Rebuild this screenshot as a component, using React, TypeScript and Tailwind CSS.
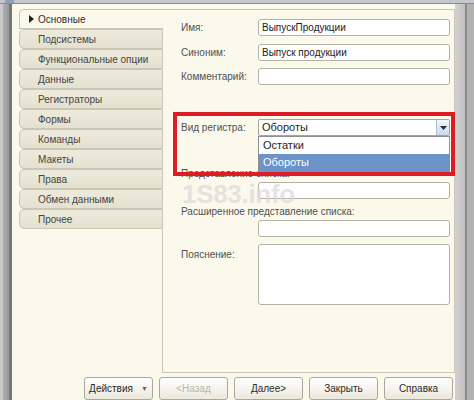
const tabs = [
  'Основные',
  'Подсистемы',
  'Функциональные опции',
  'Данные',
  'Регистраторы',
  'Формы',
  'Команды',
  'Макеты',
  'Права',
  'Обмен данными',
  'Прочее',
];

function Field({ value = '' }: { value?: string }) {
  return (
    <div className="flex-1 h-[17px] rounded-[3px] border border-[#b4b2a4] bg-white pl-[3px] leading-[15px] text-[#222]">
      {value}
    </div>
  );
}

function Row({ label, value, className = '' }: { label: string; value?: string; className?: string }) {
  return (
    <div className={`flex items-center ${className}`}>
      <div className="w-[77px] text-[#505050]">{label}</div>
      <Field value={value} />
    </div>
  );
}

function Button({ label, disabled, menu }: { label: string; disabled?: boolean; menu?: boolean }) {
  return (
    <div
      className={`w-[69px] h-[23px] shrink-0 flex items-center justify-center gap-[8px] rounded-[3px] border border-[#aaa89c] bg-gradient-to-b from-white to-[#ebe8dc] ${
        disabled ? 'text-[#b8b6a8]' : 'text-[#2a2a2a]'
      }`}
    >
      <span>{label}</span>
      {menu && <span className="text-[7px] text-[#666]">▼</span>}
    </div>
  );
}

export default function App() {
  return (
    <div className="w-[474px] h-[400px] overflow-hidden bg-[#b4b4b4] flex flex-col font-['Liberation_Sans',Arial,sans-serif] text-[10px] leading-[13px]">
      <div className="h-[4px] shrink-0 bg-[#c4c7cb] border-b border-[#8a8a8a] pl-[5px]">
        <div className="w-[9px] h-[3px] bg-[#8da2bb]" />
      </div>
      <div className="flex flex-1 min-h-0">
        <div className="w-[12px] flex shrink-0">
          <div className="w-[3px] bg-[#cacaca]" />
          <div className="w-[6px] bg-gradient-to-r from-[#b0b0b0] to-[#989898]" />
          <div className="w-[3px] bg-[#787878]" />
        </div>

        <div className="w-[443px] shrink-0 bg-[#fbf9ec] pl-[7px] pt-[5px] flex flex-col">
          <div className="flex h-[374px]">
            <div className="w-[144px] flex flex-col">
              {tabs.map((t, i) =>
                i === 0 ? (
                  <div
                    key={t}
                    className="h-[20px] flex items-center rounded-tl-[5px] border-l border-t border-b border-[#c9c6b3] bg-[#fbf9ec] pl-[9px] text-[#2e2e2e]"
                  >
                    <svg width="5" height="8" viewBox="0 0 5 8" className="mr-[4px]">
                      <path d="M0 0 L5 4 L0 8 Z" fill="#222" />
                    </svg>
                    {t}
                  </div>
                ) : (
                  <div
                    key={t}
                    className="h-[20px] flex items-center rounded-l-[5px] border-l border-t border-b border-r border-[#c9c6b3] bg-gradient-to-b from-[#eeebdd] to-[#e4e1cf] pl-[18px] text-[#444]"
                  >
                    {t}
                  </div>
                )
              )}
              <div className="flex-1 border-r border-[#c9c6b3]" />
            </div>

            <div className="relative flex-1 border-t border-r border-b border-[#c9c6b3] pl-[18px] pr-[4px]">
              <Row label="Имя:" value="ВыпускПродукции" className="mt-[9px]" />
              <Row label="Синоним:" value="Выпуск продукции" className="mt-[8px]" />
              <Row label="Комментарий:" className="mt-[7px]" />

              <div className="flex items-center mt-[34px]">
                <div className="w-[77px] text-[#505050]">Вид регистра:</div>
                <div className="relative flex-1 h-[17px] rounded-[2px] border border-[#a7a596] bg-white pl-[3px] leading-[15px] text-[11px] text-[#1e1e1e]">
                  Обороты
                  <div className="absolute right-0 top-0 w-[13px] h-[15px] flex items-center justify-center border-l border-[#a9bdd6] bg-gradient-to-b from-[#f1f6fc] to-[#c9dbf1]">
                    <svg width="7" height="4" viewBox="0 0 7 4">
                      <path d="M0 0 L7 0 L3.5 4 Z" fill="#2b2b2b" />
                    </svg>
                  </div>
                  <div className="absolute left-[-1px] right-[-1px] top-[16px] z-10 border border-[#8f8f8f] bg-white">
                    <div className="h-[17px] pl-[4px] leading-[17px] text-[#1e1e1e]">Остатки</div>
                    <div className="h-[17px] pl-[4px] leading-[17px] text-white bg-[#6b93c9]">Обороты</div>
                  </div>
                </div>
              </div>

              <div className="mt-[31px] text-[#505050]">Представление списка:</div>
              <div className="flex mt-[2px]">
                <div className="w-[77px]" />
                <Field />
              </div>
              <div className="mt-[6px] text-[#505050]">Расширенное представление списка:</div>
              <div className="flex mt-[2px]">
                <div className="w-[77px]" />
                <Field />
              </div>
              <div className="flex mt-[7px]">
                <div className="w-[77px] pt-[4px] text-[#505050]">Пояснение:</div>
                <div className="flex-1 h-[61px] rounded-[3px] border border-[#b4b2a4] bg-white" />
              </div>

              <div className="absolute left-[19px] top-[171px] pointer-events-none text-[26px] leading-none font-semibold text-[#d8d8d8]/70 tracking-[-0.3px]">
                1S83.info
              </div>

              <div className="absolute left-[10px] top-[102px] w-[282px] h-[64px] z-20 border-[4px] border-[#dd1d25] pointer-events-none" />
            </div>
          </div>

          <div className="flex justify-end gap-[6px] mt-[4px] pr-[2px]">
            <Button label="Действия" menu />
            <Button label="<Назад" disabled />
            <Button label="Далее>" />
            <Button label="Закрыть" />
            <Button label="Справка" />
          </div>
        </div>

        <div className="w-[19px] flex shrink-0">
          <div className="w-[10px] bg-gradient-to-r from-[#d2d2d2] to-[#c0c0c0]" />
          <div className="w-[2px] bg-[#8c8c8c]" />
          <div className="w-[7px] bg-[#b2b2b2]" />
        </div>
      </div>
    </div>
  );
}
